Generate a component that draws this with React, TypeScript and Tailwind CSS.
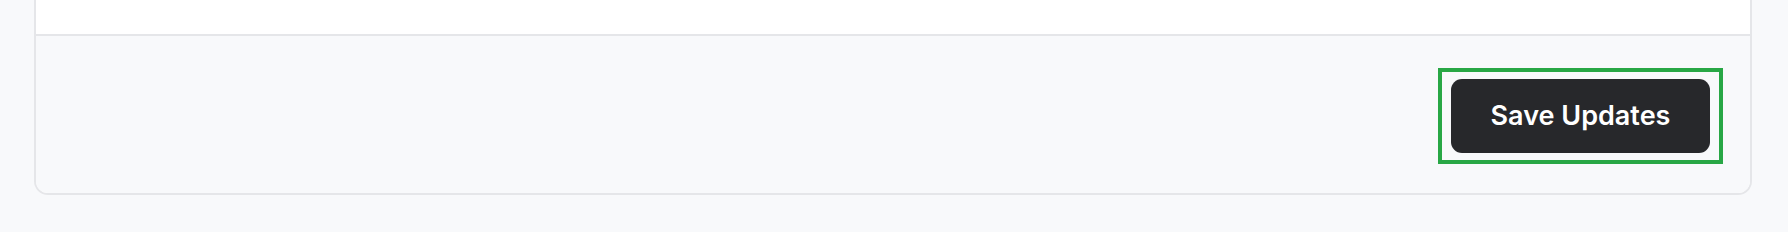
import React from 'react';

export default function App() {
  return (
    <div className="min-h-[232px] w-full bg-[#f8f9fb] pb-[35px] pl-[34px] pr-[36px] font-['Inter',sans-serif]">
      <div className="overflow-hidden rounded-b-[14px] border-x-2 border-b-2 border-[#e5e6e9] bg-white">
        <div className="h-[34px] bg-white" />
        <div className="flex justify-end border-t-2 border-[#e5e6e9] bg-[#f8f9fb] pb-[29px] pr-[27px] pt-[32px]">
          <div className="border-4 border-[#28a745] px-[9px] py-[7px]">
            <button className="block h-[74px] w-[259px] rounded-[11px] bg-[#27282b] text-[27px] font-semibold text-white">
              Save Updates
            </button>
          </div>
        </div>
      </div>
    </div>
  );
}
